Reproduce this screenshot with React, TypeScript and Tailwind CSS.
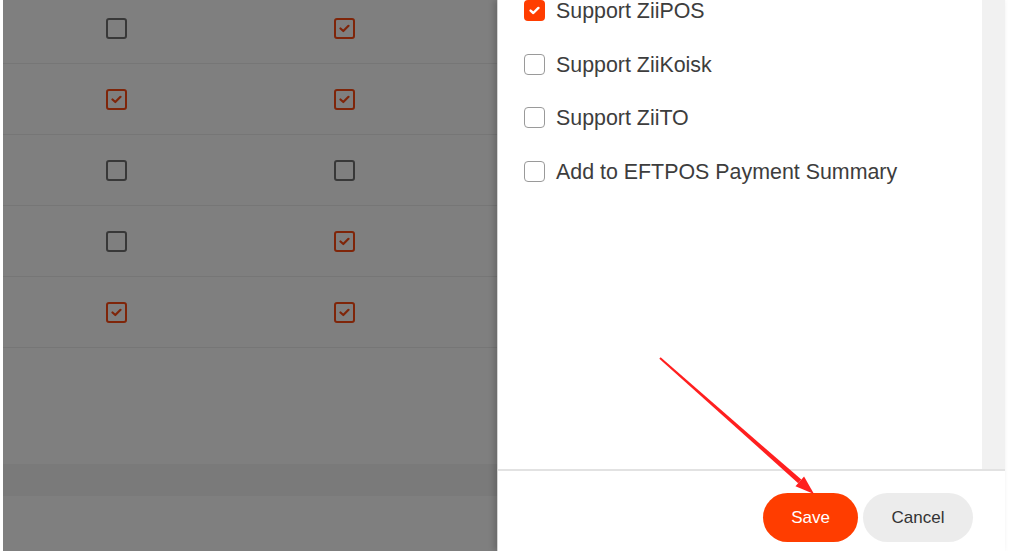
import React from "react";

const font = { fontFamily: '"Liberation Sans", Arial, sans-serif' };

function TableBox({ checked }: { checked: boolean }) {
  return checked ? (
    <div className="w-[21px] h-[21px] rounded-[3px] border-2 border-[#ff4a12] bg-white flex items-center justify-center">
      <svg width="11" height="9" viewBox="0 0 11 9">
        <path d="M1.5 4.5 L4.3 7 L9.5 1.8" fill="none" stroke="#ff4a12" strokeWidth="2.2" strokeLinecap="round" strokeLinejoin="round" />
      </svg>
    </div>
  ) : (
    <div className="w-[21px] h-[21px] rounded-[3px] border-2 border-[#707070] bg-white" />
  );
}

function DrawerBox({ checked }: { checked: boolean }) {
  return checked ? (
    <div className="w-[21px] h-[21px] rounded-[4px] bg-[#ff3d00] flex items-center justify-center shrink-0">
      <svg width="11" height="9" viewBox="0 0 11 9">
        <path d="M1.6 4.6 L4.3 7 L9.4 1.9" fill="none" stroke="#ffffff" strokeWidth="2.4" strokeLinecap="round" strokeLinejoin="round" />
      </svg>
    </div>
  ) : (
    <div className="w-[21px] h-[21px] rounded-[4px] border-[1.5px] border-[#9a9a9a] bg-white shrink-0" />
  );
}

const rows: [boolean, boolean][] = [
  [false, true],
  [true, true],
  [false, false],
  [false, true],
  [true, true],
];

const options: [string, boolean][] = [
  ["Support ZiiPOS", true],
  ["Support ZiiKoisk", false],
  ["Support ZiiTO", false],
  ["Add to EFTPOS Payment Summary", false],
];

export default function App() {
  const sx = 660, sy = 358, tx = 814, ty = 494;
  const dx = tx - sx, dy = ty - sy;
  const len = Math.hypot(dx, dy);
  const ux = dx / len, uy = dy / len;
  const px = -uy, py = ux;
  const bx = tx - ux * 19, by = ty - uy * 19;
  const shaft = [
    [sx + px * 1.0, sy + py * 1.0],
    [bx + px * 2.4, by + py * 2.4],
    [bx - px * 2.4, by - py * 2.4],
    [sx - px * 1.0, sy - py * 1.0],
  ];
  const head = [
    [tx, ty],
    [bx + px * 6.5, by + py * 6.5],
    [bx - px * 6.5, by - py * 6.5],
  ];
  const pts = (a: number[][]) => a.map((p) => p.join(",")).join(" ");

  return (
    <div className="relative w-[1015px] h-[551px] overflow-hidden bg-white flex" style={font}>
      <div className="w-[3px] h-full bg-white shrink-0" />
      <div className="relative w-[1002px] h-full shrink-0">
        <div className="flex flex-col h-full bg-white">
          <div className="-mt-[7px]">
            {rows.map((r, i) => (
              <div key={i} className="h-[71px] border-b border-[#ececec] grid grid-cols-[226px_230px] items-center justify-items-center">
                <TableBox checked={r[0]} />
                <TableBox checked={r[1]} />
              </div>
            ))}
          </div>
          <div className="h-[116px]" />
          <div className="h-[32px] bg-[#f4f4f4]" />
        </div>
        <div className="absolute inset-0 bg-black/50" />
        <div className="absolute top-0 right-0 bottom-0 w-[508px] bg-white border-l border-[#d4d4d4] shadow-[-3px_0_6px_rgba(0,0,0,0.18)] flex flex-col">
          <div className="h-[469px] flex">
            <div className="flex-1 pl-[26px] flex flex-col gap-[32.5px]">
              {options.map(([label, checked]) => (
                <div key={label} className="h-[21px] flex items-center gap-[11px]">
                  <DrawerBox checked={checked} />
                  <span className="pt-[3px] text-[21.4px] leading-none text-[#3d3d3d] whitespace-nowrap">{label}</span>
                </div>
              ))}
            </div>
            <div className="w-[23px] h-full bg-[#f1f1f1]" />
          </div>
          <div className="flex-1 border-t-2 border-[#e2e2e2] flex items-start justify-end pr-[32px] pt-[22px] gap-[5px]">
            <button className="w-[95px] h-[49px] rounded-full bg-[#ff3d00] text-white text-[17px]">Save</button>
            <button className="w-[110px] h-[49px] rounded-full bg-[#ececec] text-[#333] text-[17px]">Cancel</button>
          </div>
        </div>
      </div>
      <div className="w-[10px] h-full bg-white shrink-0" />
      <svg className="absolute inset-0 pointer-events-none" width="1015" height="551">
        <polygon points={pts(shaft)} fill="#ff1f1f" />
        <polygon points={pts(head)} fill="#ff1f1f" />
      </svg>
    </div>
  );
}
